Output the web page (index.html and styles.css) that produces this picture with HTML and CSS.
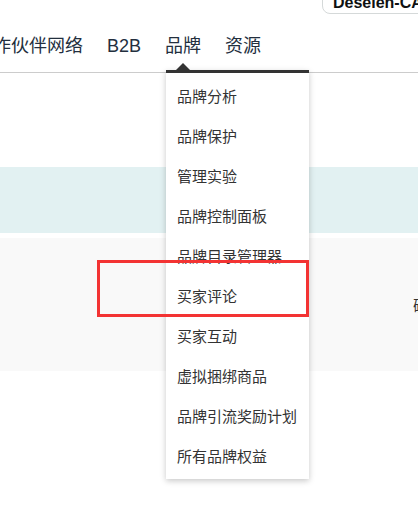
FILE: index.html
```html
<!DOCTYPE html>
<html lang="zh-CN">
  <head>
    <meta charset="UTF-8" />
    <title>品牌</title>
    <link rel="stylesheet" href="styles.css">
  </head>
  <body>
    <div class="page">
      <div class="topbar">
        <div class="store-select">Deselen-CA</div>
      </div>

      <ul class="nav">
        <li class="nav-item">合作伙伴网络</li>
        <li class="nav-item">B2B</li>
        <li class="nav-item active">
          品牌
          <div class="dropdown">
            <span class="caret"></span>
            <ul class="menu">
              <li>品牌分析</li>
              <li>品牌保护</li>
              <li>管理实验</li>
              <li>品牌控制面板</li>
              <li>品牌目录管理器</li>
              <li>买家评论</li>
              <li>买家互动</li>
              <li>虚拟捆绑商品</li>
              <li>品牌引流奖励计划</li>
              <li>所有品牌权益</li>
            </ul>
          </div>
        </li>
        <li class="nav-item">资源</li>
      </ul>

      <div class="band band-teal"></div>
      <div class="band band-gray">
        <span class="band-text">确定</span>
      </div>

      <!-- 标注框 -->
      <div class="highlight"></div>
    </div>
  </body>
</html>
```
FILE: styles.css
```css
/* 全局样式 */
body {
  margin: 0;
  font-family: "Liberation Sans", "Noto Sans CJK SC", sans-serif;
  background-color: #ffffff;
  color: #232f3e;
  overflow: hidden;
}

.page {
  position: relative;
  width: 418px;
  height: 505px;
  overflow: hidden;
}

.topbar {
  height: 14px;
  display: flex;
  align-items: flex-end;
  padding-left: 322px;
}

.store-select {
  flex: none;
  box-sizing: border-box;
  width: 120px;
  height: 36px;
  padding: 14px 10px 0;
  line-height: 20px;
  font-size: 16px;
  font-weight: bold;
  color: #0f1111;
  white-space: nowrap;
  border: 1px solid #d5d9d9;
  border-radius: 8px;
}

.nav {
  list-style: none;
  margin: 0 0 0 -25px;
  padding: 20px 0 14px;
  display: flex;
  gap: 24px;
  border-bottom: 1px solid #cccccc;
  width: 460px;
}

.nav-item {
  font-size: 18px;
  line-height: 24px;
  white-space: nowrap;
}

.nav-item.active {
  position: relative;
}

.dropdown {
  position: absolute;
  top: 36px;
  left: 1px;
  width: 143px;
  background-color: #ffffff;
  border-top: 3px solid #333333;
  box-shadow: 0 2px 6px rgba(0, 0, 0, 0.22);
  z-index: 2;
}

.caret {
  position: absolute;
  top: -10px;
  left: 10px;
  width: 0;
  height: 0;
  border-left: 7px solid transparent;
  border-right: 7px solid transparent;
  border-bottom: 7px solid #333333;
}

.menu {
  list-style: none;
  margin: 0;
  padding: 4px 0 2px;
}

.menu li {
  padding-left: 11px;
  font-size: 15px;
  line-height: 40px;
  color: #333333;
  white-space: nowrap;
}

.band {
  width: 100%;
}

.band-teal {
  margin-top: 94px;
  height: 66px;
  background-color: #e2f1f2;
}

.band-gray {
  margin-top: 5px;
  height: 133px;
  background-color: #f9f9f9;
  display: flex;
  align-items: center;
  padding-left: 413px;
  box-sizing: border-box;
  white-space: nowrap;
  font-size: 15px;
  color: #333333;
}

.highlight {
  position: absolute;
  left: 97px;
  top: 260px;
  width: 206px;
  height: 51px;
  border: 3px solid #f33333;
  z-index: 3;
}
```
